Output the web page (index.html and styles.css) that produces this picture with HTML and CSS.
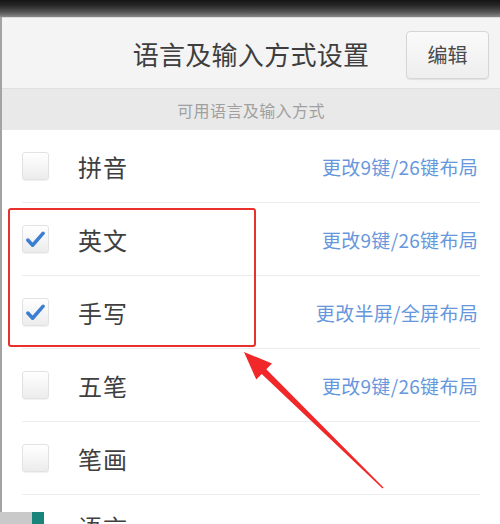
FILE: index.html
```html
<!DOCTYPE html>
<html lang="zh-CN">
<head>
<meta charset="utf-8">
<title>语言及输入方式设置</title>
<link rel="stylesheet" href="styles.css">
</head>
<body>
<div class="screen">
  <div class="topbar"></div>
  <div class="page">
    <header class="header">
      <span></span>
      <h1 class="title">语言及输入方式设置</h1>
      <button class="edit">编辑</button>
    </header>
    <div class="section">可用语言及输入方式</div>
    <ul class="list">
      <li class="row">
        <span class="check"></span>
        <span class="name">拼音</span>
        <span class="link">更改9键/26键布局</span>
      </li>
      <li class="row">
        <span class="check on"><svg viewBox="0 0 26 26"><path d="M5 14 L10 19.5 L21 7"/></svg></span>
        <span class="name">英文</span>
        <span class="link">更改9键/26键布局</span>
      </li>
      <li class="row">
        <span class="check on"><svg viewBox="0 0 26 26"><path d="M5 14 L10 19.5 L21 7"/></svg></span>
        <span class="name">手写</span>
        <span class="link">更改半屏/全屏布局</span>
      </li>
      <li class="row">
        <span class="check"></span>
        <span class="name">五笔</span>
        <span class="link">更改9键/26键布局</span>
      </li>
      <li class="row">
        <span class="check"></span>
        <span class="name">笔画</span>
      </li>
      <li class="row last">
        <span class="check hidden"></span>
        <span class="name">语言</span>
      </li>
    </ul>
  </div>
  <div class="highlight"></div>
  <svg class="arrow" viewBox="0 0 500 524" width="500" height="524">
    <polygon points="244,352 272,363.5 266.3,369.3 383.5,487.6 382.5,488.4 261.7,373.9 256.3,379.6"/>
  </svg>
  <div class="corner"><span class="corner-grey"></span><span class="corner-teal"></span></div>
</div>
</body>
</html>
```
FILE: styles.css
```css
* { box-sizing: border-box; }
html, body { margin: 0; padding: 0; }
body {
  width: 500px;
  height: 524px;
  overflow: hidden;
  background: #fff;
  font-family: "Noto Sans CJK SC", "Noto Sans", sans-serif;
}
.screen {
  position: relative;
  width: 500px;
  height: 524px;
  overflow: hidden;
}
.topbar {
  height: 17px;
  background: linear-gradient(to bottom, #141414 0%, #2a2a2a 35%, #5a5a5a 75%, #8a8a8a 100%);
}
.page {
  border-left: 2px solid #a3a3a3;
}
.header {
  height: 71px;
  background: #f3f4f3;
  border-top: 1px solid #dcdcdc;
  display: grid;
  grid-template-columns: 1fr auto 1fr;
  align-items: center;
}
.title {
  margin: 0;
  font-size: 26px;
  font-weight: normal;
  color: #3e3e3e;
  letter-spacing: 0.3px;
  padding-top: 1px;
}
.edit {
  justify-self: end;
  margin-right: 11px;
  width: 83px;
  height: 48px;
  margin-top: 3px;
  border: 1px solid #d6d6d6;
  border-radius: 4px;
  background: linear-gradient(to bottom, #fafafa, #eeeeee);
  box-shadow: 0 1px 1px rgba(0,0,0,0.08);
  font-family: "Noto Sans CJK SC", sans-serif;
  font-size: 20px;
  color: #4a4a4a;
  padding: 0;
}
.section {
  height: 42px;
  background: #e9e9e9;
  border-top: 1px solid #e0e0e0;
  display: flex;
  align-items: center;
  justify-content: center;
  font-size: 16px;
  color: #a0a0a0;
  letter-spacing: 0.4px;
}
.list {
  list-style: none;
  margin: 0;
  padding: 0 20px;
}
.row {
  height: 73px;
  display: flex;
  align-items: center;
  border-bottom: 1px solid #ededed;
}
.row.last { border-bottom: none; align-items: flex-start; padding-top: 14px; }
.check {
  width: 27px;
  height: 28px;
  border: 1px solid #e2e2e2;
  border-radius: 3px;
  background: linear-gradient(to bottom, #ffffff, #ececec);
  box-shadow: 0 1px 1px rgba(0,0,0,0.06);
  display: flex;
  align-items: center;
  justify-content: center;
  flex: none;
}
.check.hidden { visibility: hidden; }
.check svg {
  width: 26px;
  height: 26px;
}
.check svg path {
  fill: none;
  stroke: #3b7fd2;
  stroke-width: 3.6;
  stroke-linecap: round;
  stroke-linejoin: round;
}
.name {
  margin-left: 29px;
  font-size: 24px;
  color: #3f3f3f;
  letter-spacing: 1px;
}
.link {
  margin-left: auto;
  margin-right: 2px;
  font-size: 19px;
  letter-spacing: 0.3px;
  color: #6697dd;
}
.highlight {
  position: absolute;
  left: 8px;
  top: 208px;
  width: 248px;
  height: 139px;
  border: 2px solid #e8302d;
  border-radius: 3px;
}
.arrow {
  position: absolute;
  left: 0;
  top: 0;
}
.arrow polygon { fill: #f0282a; }
.corner {
  position: absolute;
  left: 0;
  top: 512px;
  height: 12px;
  display: flex;
}
.corner-grey { width: 32px; background: #c9c9c9; }
.corner-teal { width: 12px; background: #19857a; }
```
